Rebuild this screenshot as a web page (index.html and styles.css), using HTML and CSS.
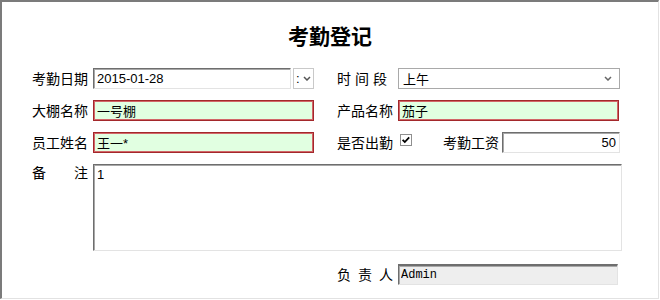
FILE: index.html
```html
<!DOCTYPE html>
<html lang="zh-CN">
<head>
  <meta charset="UTF-8">
  <title>考勤登记</title>
  <link rel="stylesheet" href="styles.css">
</head>
<body>
  <div class="panel">
    <h1 class="title">考勤登记</h1>

    <form class="form">
      <label class="lbl">考勤日期</label>
      <div class="date-field">
        <input class="txt sunken date-input" value="2015-01-28">
        <span class="picker">:<svg width="8" height="5" viewBox="0 0 8 5"><path d="M1 1 L4 4 L7 1" fill="none" stroke="#555" stroke-width="1.5"/></svg></span>
      </div>
      <label class="lbl right spaced period">时 间 段</label>
      <div class="select">
        <span>上午</span>
        <svg width="8" height="5" viewBox="0 0 8 5"><path d="M1 1 L4 4 L7 1" fill="none" stroke="#666" stroke-width="1.5"/></svg>
      </div>

      <label class="lbl">大棚名称</label>
      <input class="txt required" value="一号棚">
      <label class="lbl right">产品名称</label>
      <input class="txt required" value="茄子">

      <label class="lbl">员工姓名</label>
      <input class="txt required" value="王一*">
      <label class="lbl right">是否出勤</label>
      <div class="attend">
        <span class="check">
          <svg width="12" height="12" viewBox="0 0 12 12">
            <rect x="0.5" y="0.5" width="11" height="11" fill="#fff" stroke="#8f8f8f"/>
            <path d="M2.6 5.8 L4.8 8 L9.2 3.4" fill="none" stroke="#000" stroke-width="1.8"/>
          </svg>
        </span>
        <label class="lbl wage-lbl">考勤工资</label>
        <input class="txt sunken wage" value="50">
      </div>

      <label class="lbl lbl-top">备　　注</label>
      <textarea class="memo sunken">1</textarea>

      <label class="lbl right spaced last">负 责 人</label>
      <input class="txt sunken readonly last" value="Admin" readonly>
    </form>
  </div>
</body>
</html>
```

FILE: styles.css
```css
body {
  margin: 0;
  background-color: #fff;
  font-family: "Noto Sans CJK SC", sans-serif;
  color: #000;
}

.panel {
  box-sizing: border-box;
  width: 659px;
  height: 299px;
  border-top: 2px solid #7b7b7b;
  border-left: 2px solid #7b7b7b;
  border-right: 1px solid #e2e2e2;
  border-bottom: 1px solid #e2e2e2;
  padding: 22px 0 0 30px;
}

.title {
  margin: 0;
  padding-right: 30px;
  font-size: 21px;
  line-height: 22px;
  font-weight: bold;
  text-align: center;
}

.form {
  display: grid;
  grid-template-columns: 61px 221px 23px 61px 222px;
  grid-template-rows: 21px 21px 21px 87px 21px;
  row-gap: 11px;
  margin-top: 22px;
}

.lbl {
  grid-column: 1;
  font-size: 14px;
  line-height: 21px;
  white-space: pre;
}

.lbl.right {
  grid-column: 4;
}

/* labels with spread-out characters */
.lbl.spaced {
  width: 56px;
  white-space: normal;
  text-align-last: justify;
}

.lbl.period {
  width: 50px;
}

.lbl-top {
  line-height: 17px;
}

.txt {
  box-sizing: border-box;
  height: 21px;
  margin: 0;
  padding: 0 3px;
  font-family: "Liberation Sans", "Noto Sans CJK SC", sans-serif;
  font-size: 13px;
  color: #000;
  outline: none;
}

.sunken {
  border: 1px solid;
  border-color: #6e6e6e #e3e3e3 #e3e3e3 #6e6e6e;
  box-shadow: inset 1px 1px 0 #a8a8a8;
}

.required {
  width: 221px;
  border: 1px solid #a3282b;
  box-shadow: inset 0 0 0 1px #d26669;
  background-color: #e1ffe1;
}

.date-field {
  display: flex;
  gap: 2px;
}

.date-input {
  width: 199px;
}

.picker {
  box-sizing: border-box;
  display: flex;
  align-items: center;
  gap: 3px;
  width: 21px;
  height: 21px;
  padding-left: 2px;
  border: 1px solid #c9c9c9;
  font-family: "Liberation Sans", sans-serif;
  font-size: 13px;
}

.select {
  box-sizing: border-box;
  display: flex;
  align-items: center;
  justify-content: space-between;
  height: 21px;
  padding: 0 7px 0 4px;
  border: 1px solid #a9a9a9;
  font-size: 13px;
}

.attend {
  display: flex;
  align-items: center;
}

.check {
  display: flex;
  margin: -6px 0 0 2px;
}

.wage-lbl {
  margin-left: 31px;
  margin-right: 3px;
}

.wage {
  width: 118px;
  text-align: right;
}

.memo {
  box-sizing: border-box;
  grid-column: 2 / 6;
  align-self: start;
  width: 529px;
  height: 87px;
  margin: 0;
  padding: 2px 3px;
  resize: none;
  font-family: "Liberation Sans", sans-serif;
  font-size: 13px;
  outline: none;
}

.last {
  margin-top: 2px;
}

.readonly {
  width: 220px;
  background-color: #eee;
  border-top-width: 2px;
  font-family: "Liberation Mono", monospace;
  font-size: 12px;
  padding-left: 2px;
}
```
